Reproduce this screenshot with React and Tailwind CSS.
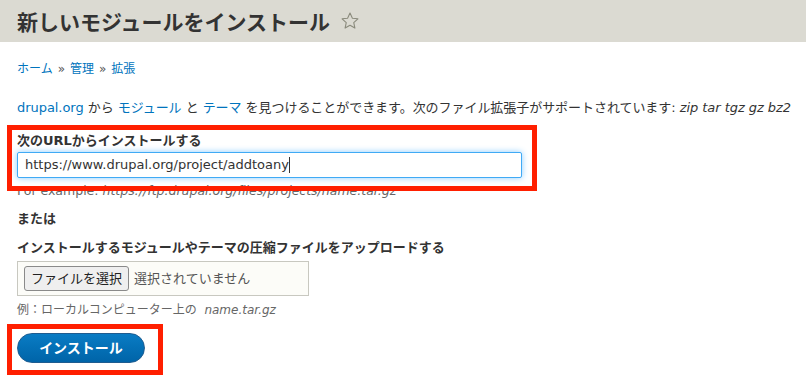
import React from 'react';

const font = { fontFamily: '"DejaVu Sans", "Noto Sans CJK JP", sans-serif' };

function Star() {
  return (
    <svg width="20" height="20" viewBox="0 0 24 24" fill="none" stroke="#8a8a7c" strokeWidth="1.3" strokeLinejoin="round">
      <path d="M12 2.5l2.9 6.2 6.6.7-5 4.5 1.4 6.6L12 17.2l-5.9 3.3 1.4-6.6-5-4.5 6.6-.7z" />
    </svg>
  );
}

export default function App() {
  return (
    <div className="relative w-[806px] h-[383px] bg-white text-[#333] overflow-hidden" style={font}>
      <div className="h-[42px] bg-[#dbdad2] flex items-center px-[17px] gap-[10px]">
        <h1 className="text-[21px] font-bold text-[#333] font-['Noto_Sans_CJK_JP',sans-serif] leading-none">新しいモジュールをインストール</h1>
        <Star />
      </div>

      <div className="px-[17px]">
        <div className="mt-[19px] text-[12px] leading-[16px]">
          <a className="text-[#0074bd]">ホーム</a>
          <span className="mx-[5px] text-[#555]">»</span>
          <a className="text-[#0074bd]">管理</a>
          <span className="mx-[5px] text-[#555]">»</span>
          <a className="text-[#0074bd]">拡張</a>
        </div>

        <p className="mt-[22px] text-[13px] leading-[18px] whitespace-nowrap tracking-[-0.05px]">
          <a className="text-[#0074bd]">drupal.org</a> から <a className="text-[#0074bd]">モジュール</a> と <a className="text-[#0074bd]">テーマ</a> を見つけることができます。次のファイル拡張子がサポートされています: <em>zip tar tgz gz bz2</em>
        </p>

        <div className="mt-[15px] text-[13px] leading-[18px] font-bold">次のURLからインストールする</div>
        <div className="mt-[2px] w-[505px] h-[26px] border border-[#40aaf5] rounded-[2px] bg-white shadow-[0_0_6px_#8cccff] flex items-center px-[7px] text-[13px]">
          <span>https://www.drupal.org/project/addtoany</span>
          <span className="w-px h-[16px] bg-[#333]" />
        </div>
        <div className="mt-[4px] text-[12.5px] leading-[17px] text-[#666]">
          For example: <em>https://ftp.drupal.org/files/projects/name.tar.gz</em>
        </div>

        <div className="mt-[11px] text-[13px] leading-[18px] font-bold">または</div>
        <div className="mt-[11px] text-[13px] leading-[18px] font-bold">インストールするモジュールやテーマの圧縮ファイルをアップロードする</div>
        <div className="mt-[4px] w-[292px] h-[35px] border border-[#c8c8c0] bg-[#fcfcf8] flex items-center pl-[6px] gap-[5px] text-[13px]">
          <div className="h-[25px] px-[6px] flex items-center border border-[#8a8a8a] rounded-[3px] bg-[#efefef] text-[#222]">ファイルを選択</div>
          <span className="text-[#555]">選択されていません</span>
        </div>
        <div className="mt-[6px] text-[12px] leading-[16px] text-[#666]">
          例：ローカルコンピューター上の&nbsp; <em>name.tar.gz</em>
        </div>

        <button className="mt-[15px] w-[128px] h-[30px] rounded-full border border-[#1e5c90] bg-gradient-to-b from-[#0a7cc4] to-[#0064a8] text-white text-[14px] font-bold flex items-center justify-center">
          インストール
        </button>
      </div>

      <div className="absolute left-[7px] top-[125px] w-[530px] h-[66px] border-[5px] border-[#ff1f00]" />
      <div className="absolute left-[7px] top-[324px] w-[156px] h-[51px] border-[5px] border-[#ff1f00]" />
    </div>
  );
}
